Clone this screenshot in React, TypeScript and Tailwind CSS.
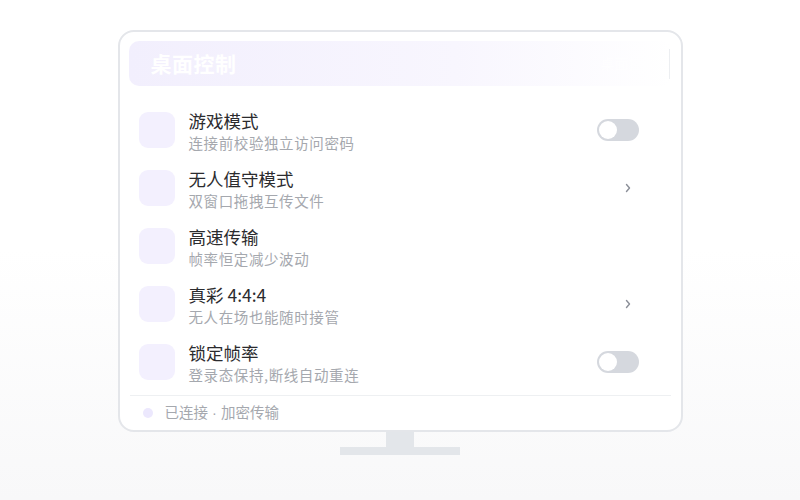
import React from "react";

const rows = [
  { t: "游戏模式", s: "连接前校验独立访问密码", r: "toggle" },
  { t: "无人值守模式", s: "双窗口拖拽互传文件", r: "chev" },
  { t: "高速传输", s: "帧率恒定减少波动", r: "none" },
  { t: "真彩 4:4:4", s: "无人在场也能随时接管", r: "chev" },
  { t: "锁定帧率", s: "登录态保持,断线自动重连", r: "toggle" },
];

function Toggle() {
  return (
    <div className="w-[42px] h-[22px] rounded-full bg-[#d5d8de] p-[2px] flex items-center">
      <div className="w-[18px] h-[18px] rounded-full bg-white" />
    </div>
  );
}

function Chev() {
  return (
    <svg width="8" height="10" viewBox="0 0 8 10" className="mr-[7px]">
      <path d="M2.5 1.5 L5.5 5 L2.5 8.5" fill="none" stroke="#8b8f98" strokeWidth="1.4" strokeLinecap="round" strokeLinejoin="round" />
    </svg>
  );
}

export default function App() {
  return (
    <div
      className="w-[800px] h-[500px] bg-gradient-to-b from-white from-50% to-[#f8f8f9] pt-[30px] flex flex-col items-center"
      style={{ fontFamily: '"Noto Sans CJK SC", "Noto Sans", sans-serif' }}
    >
      <div className="w-[565px] h-[402px] border-2 border-[#e4e6ea] rounded-[16px] bg-white px-[9px] pt-[9px] flex flex-col">
        <div className="h-[45px] rounded-[10px] bg-gradient-to-r from-[#f2effd] via-[#f8f6fe] via-60% to-white flex items-center justify-between pl-[22px] pr-[2px]">
          <span className="text-white text-[21px] font-bold tracking-[0.5px]">桌面控制</span>
          <div className="flex items-center gap-[12px] h-[30px]">
            <span className="text-white/70 text-[14px]">桌面控制</span>
            <div className="w-[1px] h-[30px] bg-[#eceef1]" />
          </div>
        </div>
        <div className="mt-[15px] flex flex-col">
          {rows.map((r) => (
            <div key={r.t} className="h-[58px] flex items-center pl-[10px] pr-[33px]">
              <div className="w-[36px] h-[36px] rounded-[9px] bg-[#f3f0fe] shrink-0" />
              <div className="ml-[14px] flex flex-col flex-1 mt-[2px]">
                <span className="text-[17.5px] leading-[22px] text-[#2b2b2e]">{r.t}</span>
                <span className="text-[14.5px] leading-[21px] text-[#a5a8ae] tracking-[0.6px]">{r.s}</span>
              </div>
              {r.r === "toggle" && <Toggle />}
              {r.r === "chev" && <Chev />}
            </div>
          ))}
        </div>
        <div className="mt-[4px] h-[1px] bg-[#eef0f2] mx-[1px]" />
        <div className="flex-1 flex items-center pl-[14px] pb-[1px]">
          <div className="w-[10px] h-[10px] rounded-full bg-[#ece8fd]" />
          <span className="ml-[12px] text-[14.5px] text-[#a5a8ae]">
            已连接<span style={{ fontFamily: '"Liberation Sans", sans-serif' }}> · </span>加密传输
          </span>
        </div>
      </div>
      <div className="w-[28px] h-[15px] bg-[#e3e6ea]" />
      <div className="w-[120px] h-[8px] bg-[#e3e6ea]" />
    </div>
  );
}
